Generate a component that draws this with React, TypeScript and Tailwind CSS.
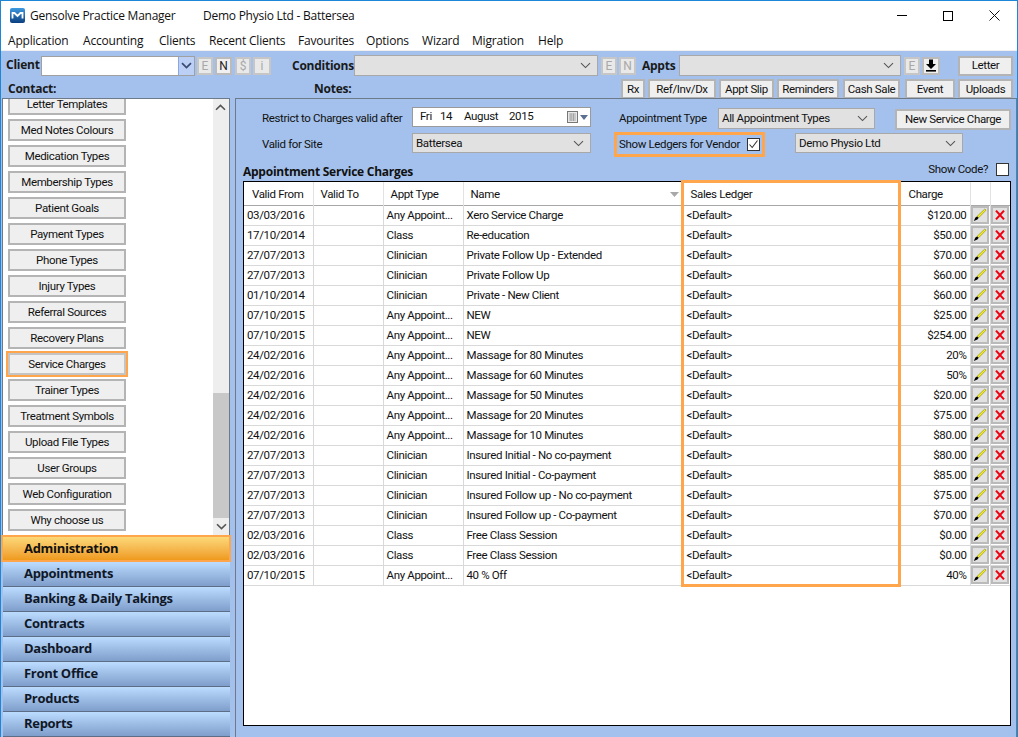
import React from "react";

const Chevron = ({ color = "#555", sw = 1.1 }: { color?: string; sw?: number }) => (
  <svg width="11" height="7" viewBox="0 0 11 7" fill="none">
    <path d="M1 1.2 L5.5 5.6 L10 1.2" stroke={color} strokeWidth={sw} />
  </svg>
);

const Pencil = () => (
  <svg width="14" height="14" viewBox="0 0 14 14">
    <path d="M11.8 1 L13 2.2 L5.6 9.8 L4 8.4 Z" fill="#f7f012" stroke="#6f6a10" strokeWidth="0.5" />
    <path d="M4 8.4 L5.6 9.8 L4.4 11.4 L0.8 13 L2.4 9.6 Z" fill="#000" />
  </svg>
);

const Cross = () => (
  <svg width="12" height="12" viewBox="0 0 12 12">
    <path d="M2 1.6 L10 10.4 M10 1.6 L2 10.4" stroke="#f00010" strokeWidth="2.1" />
  </svg>
);

function TinyBtn({ label, w, active }: { label: string; w: string; active?: boolean }) {
  return (
    <div className={`${w} h-[18px] shrink-0 flex items-center justify-center border-2 text-[12px] font-['Roboto'] tracking-normal ${active ? "text-[#222] border-[#bbbbbb] bg-[#f0f0f0]" : "text-[#a8a8a8] border-[#c6c6c6] bg-[#e9e9e9]"}`}>
      {label}
    </div>
  );
}

function Btn({ label, w, h = "h-[20px]" }: { label: string; w: string; h?: string }) {
  return (
    <div className={`${w} ${h} shrink-0 flex items-center justify-center pt-[1px] border-2 border-[#b4b4b4] bg-[#efefef] text-[#111] whitespace-nowrap`}>
      {label}
    </div>
  );
}

function Select({ w, h = "h-[21px]", value }: { w: string; h?: string; value?: string }) {
  return (
    <div className={`${w} ${h} shrink-0 flex items-center justify-between pl-[3px] pr-[6px] border border-[#a8a8a8] bg-[#e1e1e1] text-[#111] whitespace-nowrap`}>
      <span className="pt-[1px]">{value}</span>
      <Chevron />
    </div>
  );
}

const sideItems = [
  "Letter Templates", "Med Notes Colours", "Medication Types", "Membership Types", "Patient Goals",
  "Payment Types", "Phone Types", "Injury Types", "Referral Sources", "Recovery Plans",
  "Service Charges", "Trainer Types", "Treatment Symbols", "Upload File Types", "User Groups",
  "Web Configuration", "Why choose us",
];

const navItems = ["Appointments", "Banking & Daily Takings", "Contracts", "Dashboard", "Front Office", "Products", "Reports"];

const rows: [string, string, string, string][] = [
  ["03/03/2016", "Any Appoint...", "Xero Service Charge", "$120.00"],
  ["17/10/2014", "Class", "Re-education", "$50.00"],
  ["27/07/2013", "Clinician", "Private Follow Up - Extended", "$70.00"],
  ["27/07/2013", "Clinician", "Private Follow Up", "$60.00"],
  ["01/10/2014", "Clinician", "Private - New Client", "$60.00"],
  ["07/10/2015", "Any Appoint...", "NEW", "$25.00"],
  ["07/10/2015", "Any Appoint...", "NEW", "$254.00"],
  ["24/02/2016", "Any Appoint...", "Massage for 80 Minutes", "20%"],
  ["24/02/2016", "Any Appoint...", "Massage for 60 Minutes", "50%"],
  ["24/02/2016", "Any Appoint...", "Massage for 50 Minutes", "$20.00"],
  ["24/02/2016", "Any Appoint...", "Massage for 20 Minutes", "$75.00"],
  ["24/02/2016", "Any Appoint...", "Massage for 10 Minutes", "$80.00"],
  ["27/07/2013", "Clinician", "Insured Initial - No co-payment", "$80.00"],
  ["27/07/2013", "Clinician", "Insured Initial - Co-payment", "$85.00"],
  ["27/07/2013", "Clinician", "Insured Follow up - No co-payment", "$75.00"],
  ["27/07/2013", "Clinician", "Insured Follow up - Co-payment", "$70.00"],
  ["02/03/2016", "Class", "Free Class Session", "$0.00"],
  ["02/03/2016", "Class", "Free Class Session", "$0.00"],
  ["07/10/2015", "Any Appoint...", "40 % Off", "40%"],
];

const menu: [string, string][] = [
  ["Application", "w-[75px]"], ["Accounting", "w-[76px]"], ["Clients", "w-[50px]"], ["Recent Clients", "w-[89px]"],
  ["Favourites", "w-[68px]"], ["Options", "w-[56px]"], ["Wizard", "w-[50px]"], ["Migration", "w-[66px]"], ["Help", "w-[40px]"],
];

export default function App() {
  return (
    <div className="w-[1018px] h-[737px] overflow-hidden flex flex-col bg-white border-x border-t border-[#1b87d6] font-['Roboto'] text-[11.5px] tracking-[-0.35px] text-[#111]">
      {/* Title bar */}
      <div className="h-[29px] shrink-0 flex items-center pl-[9px] bg-white font-['Open_Sans'] text-[12px] tracking-[-0.25px]">
        <svg width="15" height="15" viewBox="0 0 15 15">
          <defs>
            <linearGradient id="lg" x1="0" y1="0" x2="0" y2="1">
              <stop offset="0" stopColor="#3f9be0" />
              <stop offset="1" stopColor="#0b3f80" />
            </linearGradient>
          </defs>
          <rect width="15" height="15" rx="2" fill="url(#lg)" />
          <path d="M2.5 10.5 V5 H4.5 L7.5 8 L10.5 5 H12.5 V10.5" fill="none" stroke="#fff" strokeWidth="1.8" />
        </svg>
        <span className="ml-[5px] w-[173px]">Gensolve Practice Manager</span>
        <span>Demo Physio Ltd - Battersea</span>
        <div className="ml-auto flex items-center">
          <div className="w-[46px] flex justify-center"><div className="w-[10px] h-px bg-black" /></div>
          <div className="w-[46px] flex justify-center"><div className="w-[10px] h-[10px] border border-black" /></div>
          <div className="w-[46px] flex justify-center">
            <svg width="11" height="11" viewBox="0 0 11 11"><path d="M0.5 0.5 L10.5 10.5 M10.5 0.5 L0.5 10.5" stroke="#111" strokeWidth="1" /></svg>
          </div>
        </div>
      </div>
      {/* Menu */}
      <div className="h-[21px] shrink-0 flex items-center pl-[7px] pt-[2px] bg-white border-b border-[#f0f0f0] font-['Open_Sans'] text-[12px] tracking-[-0.2px]">
        {menu.map(([m, w]) => <span key={m} className={w}>{m}</span>)}
      </div>
      {/* Toolbar */}
      <div className="h-[47px] shrink-0 bg-[#a3c1ec] flex flex-col pt-[4px] gap-[3px]">
        <div className="h-[21px] flex items-center">
          <span className="ml-[5px] w-[35px] font-['Open_Sans'] text-[12px] tracking-[-0.25px] font-bold text-[#1a1a1a] -mt-[2px]">Client</span>
          <div className="w-[154px] h-[20px] border border-[#a0a0a0] bg-white flex justify-end">
            <div className="w-[16px] h-full bg-[#bcd0f5] border-l border-[#8aa8e0] flex items-center justify-center"><Chevron color="#3a4a70" sw={1.7} /></div>
          </div>
          <div className="ml-[2px]"><TinyBtn label="E" w="w-[16px]" /></div>
          <div className="ml-[2px]"><TinyBtn label="N" w="w-[17px]" active /></div>
          <div className="ml-[3px]"><TinyBtn label="$" w="w-[16px]" /></div>
          <div className="ml-[2px]"><TinyBtn label="i" w="w-[18px]" /></div>
          <span className="ml-[21px] w-[62px] font-['Open_Sans'] text-[12px] tracking-[-0.25px] font-bold text-[#1a1a1a]">Conditions</span>
          <Select w="w-[244px]" />
          <div className="ml-[3px]"><TinyBtn label="E" w="w-[16px]" /></div>
          <div className="ml-[2px]"><TinyBtn label="N" w="w-[17px]" /></div>
          <span className="ml-[6px] w-[37px] font-['Open_Sans'] text-[12px] tracking-[-0.25px] font-bold text-[#1a1a1a]">Appts</span>
          <Select w="w-[222px]" />
          <div className="ml-[3px]"><TinyBtn label="E" w="w-[16px]" /></div>
          <div className="ml-[2px] w-[18px] h-[18px] shrink-0 flex items-center justify-center border-2 border-[#bbb] bg-[#f0f0f0]">
            <svg width="12" height="13" viewBox="0 0 12 13"><path d="M4 0.5 H8 V5 H11 L6 10 L1 5 H4 Z" fill="#000" /><rect x="1" y="11" width="10" height="1.6" fill="#000" /></svg>
          </div>
          <div className="ml-[18px]"><Btn label="Letter" w="w-[55px]" /></div>
        </div>
        <div className="h-[20px] flex items-center">
          <span className="ml-[7px] w-[306px] font-['Open_Sans'] text-[12px] tracking-[-0.25px] font-bold text-[#1a1a1a]">Contact:</span>
          <span className="w-[307px] font-['Open_Sans'] text-[12px] tracking-[-0.25px] font-bold text-[#1a1a1a]">Notes:</span>
          <div className="flex">
            <Btn label="Rx" w="w-[24px]" />
            <div className="ml-[3px]"><Btn label="Ref/Inv/Dx" w="w-[68px]" /></div>
            <div className="ml-[3px]"><Btn label="Appt Slip" w="w-[55px]" /></div>
            <div className="ml-[3px]"><Btn label="Reminders" w="w-[62px]" /></div>
            <div className="ml-[4px]"><Btn label="Cash Sale" w="w-[57px]" /></div>
            <div className="ml-[5px]"><Btn label="Event" w="w-[50px]" /></div>
            <div className="ml-[3px]"><Btn label="Uploads" w="w-[55px]" /></div>
          </div>
        </div>
      </div>
      {/* Body */}
      <div className="flex-1 min-h-0 flex bg-[#a3c1ec] pl-[1px]">
        {/* Left column */}
        <div className="w-[228px] shrink-0 flex flex-col">
          <div className="flex-1 min-h-0 flex bg-white border-t border-x border-[#6f7a88] overflow-hidden">
            <div className="flex-1 min-w-0 overflow-hidden pl-[5px]">
              <div className="flex flex-col gap-[4px] -mt-[6px]">
                {sideItems.map((s) =>
                  s === "Service Charges" ? (
                    <div key={s} className="-ml-[2px] w-[122px] h-[26px] -my-[2px] shrink-0 flex items-center justify-center border-2 border-[#ffa64d]">
                      <div className="w-[118px] h-[22px] shrink-0 flex items-center justify-center pt-[1px] border-2 border-[#c4c4c4] bg-[#efefef] text-[#111]">{s}</div>
                    </div>
                  ) : (
                    <div key={s} className="w-[118px] h-[22px] shrink-0 flex items-center justify-center pt-[1px] border-2 border-[#b4b4b4] bg-[#efefef] text-[#111]">{s}</div>
                  )
                )}
              </div>
            </div>
            <div className="w-[16px] shrink-0 bg-[#eeeeee] flex flex-col">
              <div className="h-[17px] flex items-center justify-center rotate-180"><Chevron color="#555" sw={1.6} /></div>
              <div className="h-[277px]" />
              <div className="flex-1 bg-[#c8c8c8]" />
              <div className="h-[17px] flex items-center justify-center"><Chevron color="#555" sw={1.6} /></div>
            </div>
          </div>
          <div className="h-[27px] shrink-0 -mx-[1px] flex items-center pl-[21px] border-2 border-[#ffa64d] bg-gradient-to-b from-[#fbd877] to-[#ef9a1a] font-['Open_Sans'] font-bold text-[13px] tracking-[-0.3px] text-[#111]">Administration</div>
          {navItems.map((n) => (
            <div key={n} className="h-[25px] shrink-0 ml-[1px] flex items-center pl-[21px] pb-[1px] border-b border-[#5c6d85] bg-gradient-to-b from-[#bcdcff] to-[#7f9ecb] font-['Open_Sans'] font-bold text-[13px] tracking-[-0.3px] text-[#101828]">{n}</div>
          ))}
        </div>
        {/* Right panel */}
        <div className="ml-[5px] flex-1 min-w-0 flex flex-col border-t border-x border-[#6f7a88] pl-[7px] pr-[5px] pb-[11px]">
          <div className="h-[25px] mt-[8px] shrink-0 flex items-start whitespace-nowrap">
            <span className="ml-[19px] w-[150px] pt-[3px]">Restrict to Charges valid after</span>
            <div className="w-[179px] h-[20px] border border-[#9a9a9a] bg-white flex items-center pl-[7px] pr-[2px]">
              <span className="w-[20px]">Fri</span>
              <span className="w-[24px]">14</span>
              <span className="w-[45px]">August</span>
              <span>2015</span>
              <div className="ml-auto flex items-center gap-[2px]">
                <svg width="11" height="12" viewBox="0 0 11 12">
                  <rect x="0.5" y="0.5" width="10" height="11" fill="#e8e8e8" stroke="#777" />
                  <path d="M2 3 H9 M2 5 H9 M2 7 H9 M2 9 H9 M4 2.5 V10 M6.5 2.5 V10" stroke="#999" strokeWidth="0.8" />
                </svg>
                <svg width="8" height="5" viewBox="0 0 8 5"><path d="M0 0 H8 L4 5 Z" fill="#5b6f90" /></svg>
              </div>
            </div>
            <span className="ml-[28px] w-[99px] pt-[3px]">Appointment Type</span>
            <div className="mt-[1px]"><Select w="w-[157px]" value="All Appointment Types" /></div>
            <div className="ml-[20px] mt-[2px]"><Btn label="New Service Charge" w="w-[116px]" h="h-[21px]" /></div>
          </div>
          <div className="h-[26px] shrink-0 flex items-start whitespace-nowrap">
            <span className="ml-[19px] w-[150px] pt-[4px]">Valid for Site</span>
            <div className="mt-[1px]"><Select w="w-[179px]" h="h-[20px]" value="Battersea" /></div>
            <div className="ml-[23px] w-[151px] h-[25px] flex items-center pl-[2px] border-[3px] border-[#ffa64d]">
              <span>Show Ledgers for Vendor</span>
              <div className="ml-auto mr-[2px] w-[13px] h-[13px] bg-white border border-[#333] flex items-center justify-center">
                <svg width="11" height="11" viewBox="0 0 11 11"><path d="M1.5 5.5 L4.2 8.5 L9.5 1.5" fill="none" stroke="#333" strokeWidth="1.1" /></svg>
              </div>
            </div>
            <div className="ml-[30px] mt-[1px]"><Select w="w-[168px]" h="h-[20px]" value="Demo Physio Ltd" /></div>
          </div>
          <div className="h-[23px] shrink-0 flex items-start whitespace-nowrap">
            <span className="mt-[5px] font-['Open_Sans'] text-[12px] font-bold tracking-[-0.25px] text-[#111]">Appointment Service Charges</span>
            <span className="ml-auto mr-[8px] mt-[3px]">Show Code?</span>
            <div className="w-[13px] h-[13px] mr-[2px] mt-[5px] bg-white border border-[#333]" />
          </div>
          <div className="relative flex-1 min-h-0 border border-black bg-white">
            <table className="table-fixed border-collapse w-[766px]">
              <colgroup>
                <col className="w-[69px]" />
                <col className="w-[70px]" />
                <col className="w-[80px]" />
                <col className="w-[218px]" />
                <col className="w-[219px]" />
                <col className="w-[70px]" />
                <col className="w-[20px]" />
                <col className="w-[20px]" />
              </colgroup>
              <thead>
                <tr className="h-[23px] border-b border-[#a8a8a8]">
                  <th className="font-normal text-left pl-[8px] pt-[2px] border-r border-[#e2e2e2]">Valid From</th>
                  <th className="font-normal text-left pl-[7px] pt-[2px] border-r border-[#e2e2e2]">Valid To</th>
                  <th className="font-normal text-left pl-[7px] pt-[2px] border-r border-[#e2e2e2]">Appt Type</th>
                  <th className="font-normal text-left pl-[7px] pt-[2px] border-r border-[#e2e2e2]">
                    <div className="flex items-center justify-between pr-[2px]">
                      <span>Name</span>
                      <svg width="9" height="5" viewBox="0 0 9 5"><path d="M0 0 H9 L4.5 5 Z" fill="#a8a8a8" /></svg>
                    </div>
                  </th>
                  <th className="font-normal text-left pl-[9px] pt-[2px] border-r border-[#e2e2e2]">Sales Ledger</th>
                  <th className="font-normal text-left pl-[8px] pt-[2px] border-r border-[#e2e2e2]">Charge</th>
                  <th className="border-r border-[#e2e2e2]" />
                  <th />
                </tr>
              </thead>
              <tbody>
                {rows.map((r, i) => (
                  <tr key={i} className="h-[20px] border-b border-[#d9d9d9]">
                    <td className="pl-[3px] pt-[1px] border-r border-[#d9d9d9] whitespace-nowrap">{r[0]}</td>
                    <td className="border-r border-[#d9d9d9]" />
                    <td className="pl-[3px] pt-[1px] border-r border-[#d9d9d9] whitespace-nowrap">{r[1]}</td>
                    <td className="pl-[3px] pt-[1px] border-r border-[#d9d9d9] whitespace-nowrap">{r[2]}</td>
                    <td className="pl-[5px] pt-[1px] border-r border-[#d9d9d9]">&lt;Default&gt;</td>
                    <td className="pr-[3px] pt-[1px] text-right border-r border-[#d9d9d9]">{r[3]}</td>
                    <td className="p-0 border-r border-[#d9d9d9]">
                      <div className="w-[18px] h-[18px] mx-auto bg-[#e1e1e1] border-2 border-[#bababa] flex items-center justify-center"><Pencil /></div>
                    </td>
                    <td className="p-0">
                      <div className="w-[18px] h-[18px] mx-auto bg-[#e1e1e1] border-2 border-[#bababa] flex items-center justify-center"><Cross /></div>
                    </td>
                  </tr>
                ))}
              </tbody>
            </table>
            <div className="absolute left-[437px] top-[-2px] w-[220px] h-[407px] border-[3px] border-[#ffa64d] pointer-events-none" />
          </div>
        </div>
      </div>
    </div>
  );
}
